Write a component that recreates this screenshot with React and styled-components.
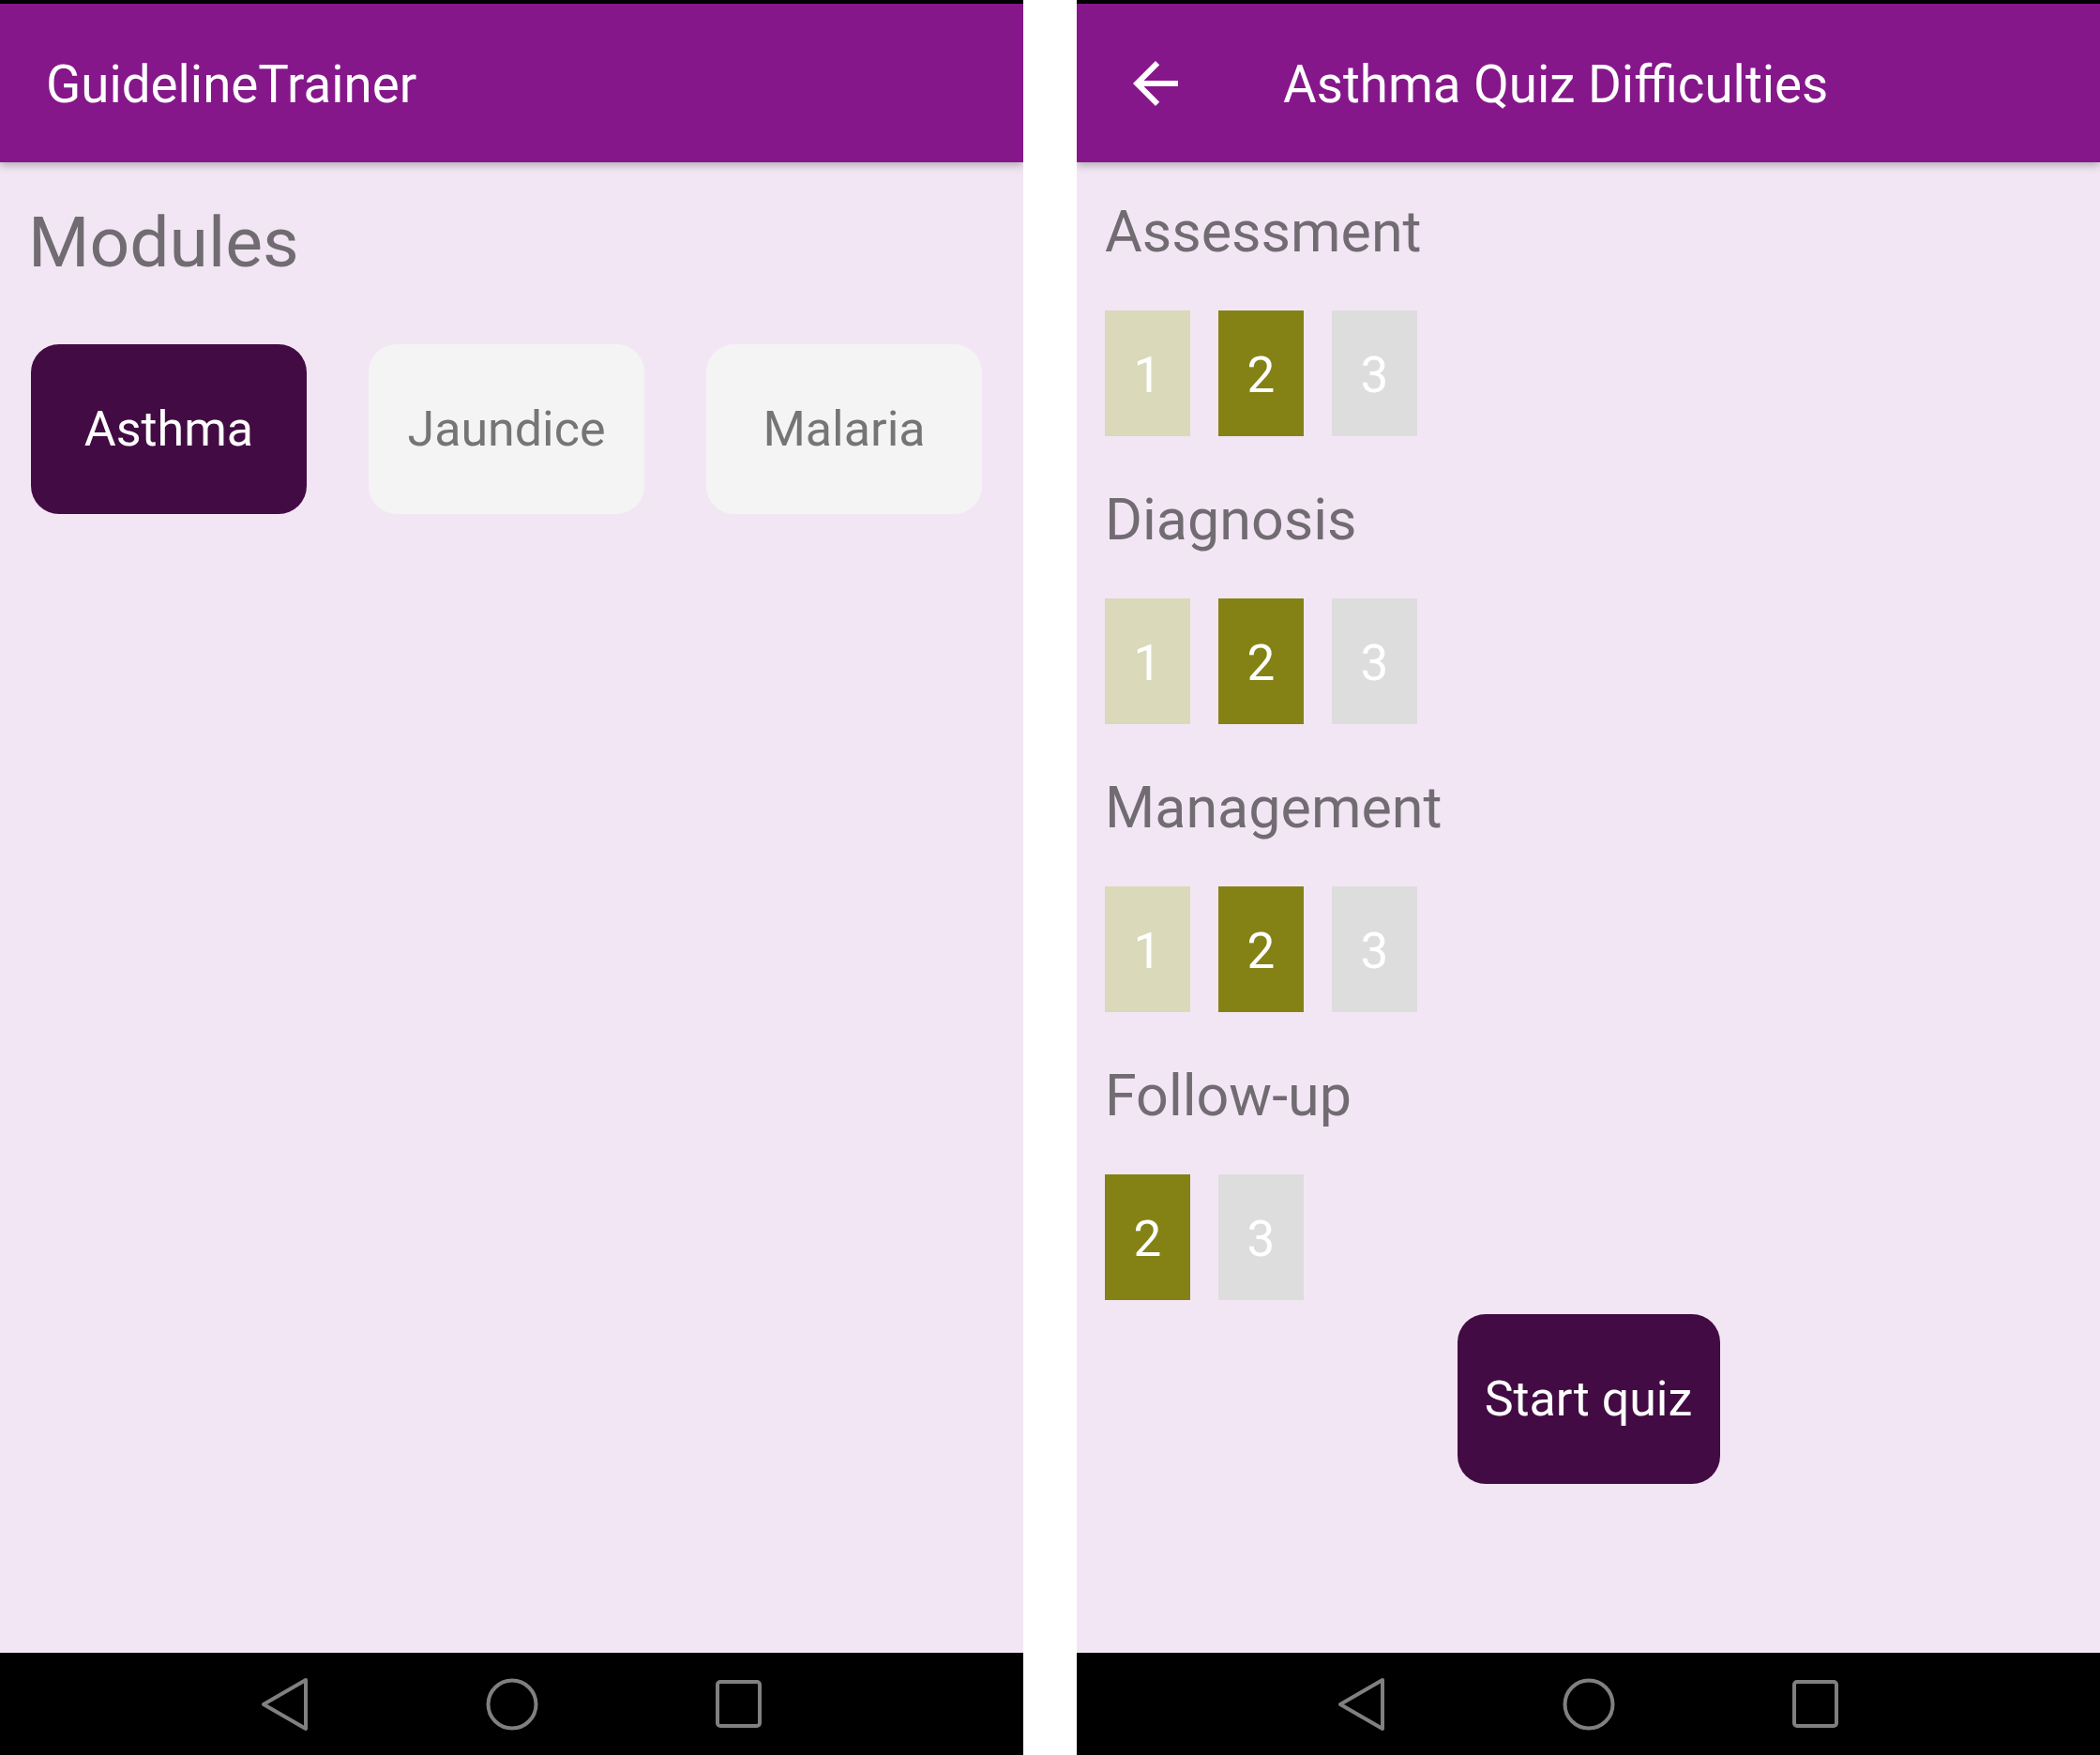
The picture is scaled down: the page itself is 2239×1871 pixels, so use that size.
import React from 'react';
import styled, { createGlobalStyle } from 'styled-components';

const GlobalStyle = createGlobalStyle`
  html, body {
    margin: 0;
    padding: 0;
    background: #ffffff;
  }
  body {
    font-family: Roboto, "Noto Sans", sans-serif;
  }
  * {
    box-sizing: border-box;
  }
`;

const modules = [
    { name: 'Asthma', active: true },
    { name: 'Jaundice', active: false },
    { name: 'Malaria', active: false },
];

// level: 'easy' | 'picked' | 'off'
const sections = [
    { title: 'Assessment', levels: [['1', 'easy'], ['2', 'picked'], ['3', 'off']] },
    { title: 'Diagnosis', levels: [['1', 'easy'], ['2', 'picked'], ['3', 'off']] },
    { title: 'Management', levels: [['1', 'easy'], ['2', 'picked'], ['3', 'off']] },
    { title: 'Follow-up', levels: [['2', 'picked'], ['3', 'off']] },
];

const levelColors = {
    easy: '#dad9b9',
    picked: '#858215',
    off: '#dddddd',
};

const BackArrow = () => (
    <svg width="72" height="72" viewBox="0 0 24 24">
        <path fill="#ffffff" d="M20 11H7.83l5.59-5.59L12 4l-8 8 8 8 1.41-1.41L7.83 13H20v-2z" />
    </svg>
);

const NavBack = () => (
    <svg width="56" height="60" viewBox="0 0 56 60">
        <path d="M50 4 L5 30 L50 56 Z" fill="none" stroke="#808080" strokeWidth="4" strokeLinejoin="round" />
    </svg>
);

const NavHome = () => (
    <svg width="60" height="60" viewBox="0 0 60 60">
        <circle cx="30" cy="30" r="25.5" fill="none" stroke="#808080" strokeWidth="4" />
    </svg>
);

const NavRecent = () => (
    <svg width="49" height="51" viewBox="0 0 49 51">
        <rect x="2" y="2" width="45" height="47" rx="3" fill="none" stroke="#808080" strokeWidth="4" />
    </svg>
);

const NavBar = () => (
    <NavStrip>
        <NavSlot><NavBack /></NavSlot>
        <NavSlot><NavHome /></NavSlot>
        <NavSlot><NavRecent /></NavSlot>
    </NavStrip>
);

const App = () => {
    return (
        <>
            <GlobalStyle />
            <Page>
                <Phone>
                    <StatusStrip />
                    <AppBar>
                        <BarTitle>GuidelineTrainer</BarTitle>
                    </AppBar>
                    <ModulesContent>
                        <PageHeading>Modules</PageHeading>
                        <ModuleRow>
                            {modules.map(({ name, active }) => (
                                <ModuleButton key={name} $active={active}>{name}</ModuleButton>
                            ))}
                        </ModuleRow>
                    </ModulesContent>
                    <NavBar />
                </Phone>

                <Phone>
                    <StatusStrip />
                    <AppBar $withBack>
                        <BackArrow />
                        <BarTitle $offset>Asthma Quiz Difficulties</BarTitle>
                    </AppBar>
                    <QuizContent>
                        {sections.map(({ title, levels }) => (
                            <Section key={title}>
                                <SectionHeading>{title}</SectionHeading>
                                <LevelRow>
                                    {levels.map(([label, kind]) => (
                                        <LevelBox key={label} $kind={kind}>{label}</LevelBox>
                                    ))}
                                </LevelRow>
                            </Section>
                        ))}
                        <StartButton>Start quiz</StartButton>
                    </QuizContent>
                    <NavBar />
                </Phone>
            </Page>
        </>
    );
};

export default App;

const Page = styled.div`
    display: flex;
    gap: 57px;
    width: 2239px;
    height: 1871px;
    background: #ffffff;
`;

const Phone = styled.div`
    display: flex;
    flex-direction: column;
    width: 1091px;
    height: 100%;
    background: #f2e6f4;
    overflow: hidden;
`;

const StatusStrip = styled.div`
    height: 4px;
    flex-shrink: 0;
    background: #000000;
`;

const AppBar = styled.header`
    position: relative;
    z-index: 1;
    flex-shrink: 0;
    height: 169px;
    display: flex;
    align-items: center;
    padding: 4px 0 0 48px;
    background: #85178a;
    box-shadow: 0 3px 9px rgba(0, 0, 0, 0.28);
    svg {
        flex-shrink: 0;
        margin-top: -4px;
    }
`;

const BarTitle = styled.h1`
    margin: 0 0 0 ${p => (p.$offset ? '100px' : '1px')};
    font-size: 54.7px;
    font-weight: 400;
    color: #ffffff;
    line-height: 1.2;
`;

const ModulesContent = styled.main`
    flex: 1;
    display: flex;
    flex-direction: column;
    padding: 40px 30px 0;
`;

const PageHeading = styled.h2`
    margin: 0;
    font-size: 75px;
    line-height: 90px;
    font-weight: 400;
    color: #716b72;
`;

const ModuleRow = styled.div`
    display: flex;
    gap: 66px;
    margin: 64px 0 0 3px;
`;

const ModuleButton = styled.button`
    width: 294px;
    height: 181px;
    border: none;
    border-radius: 30px;
    background: ${p => (p.$active ? '#430b43' : '#f4f4f4')};
    color: ${p => (p.$active ? '#ffffff' : '#757575')};
    font-family: Roboto, sans-serif;
    font-size: 52px;
    padding: 0;
`;

const QuizContent = styled.main`
    flex: 1;
    display: flex;
    flex-direction: column;
    padding: 38px 30px 0;
`;

const Section = styled.section`
    display: flex;
    flex-direction: column;
    & + & {
        margin-top: 53px;
    }
`;

const SectionHeading = styled.h3`
    margin: 0;
    font-size: 61px;
    line-height: 73px;
    font-weight: 400;
    color: #716b72;
`;

const LevelRow = styled.div`
    display: flex;
    gap: 30px;
    margin-top: 47px;
`;

const LevelBox = styled.div`
    width: 91px;
    height: 134px;
    display: flex;
    align-items: center;
    justify-content: center;
    padding-top: 4px;
    background: ${p => levelColors[p.$kind]};
    color: #ffffff;
    font-size: 53px;
`;

const StartButton = styled.button`
    align-self: center;
    margin-top: 15px;
    width: 280px;
    height: 181px;
    border: none;
    border-radius: 30px;
    background: #430b43;
    color: #ffffff;
    font-family: Roboto, sans-serif;
    font-size: 52px;
    padding: 0;
`;

const NavStrip = styled.nav`
    flex-shrink: 0;
    height: 109px;
    display: flex;
    align-items: center;
    justify-content: center;
    background: #000000;
`;

const NavSlot = styled.div`
    width: 242px;
    display: flex;
    justify-content: center;
    align-items: center;
`;
